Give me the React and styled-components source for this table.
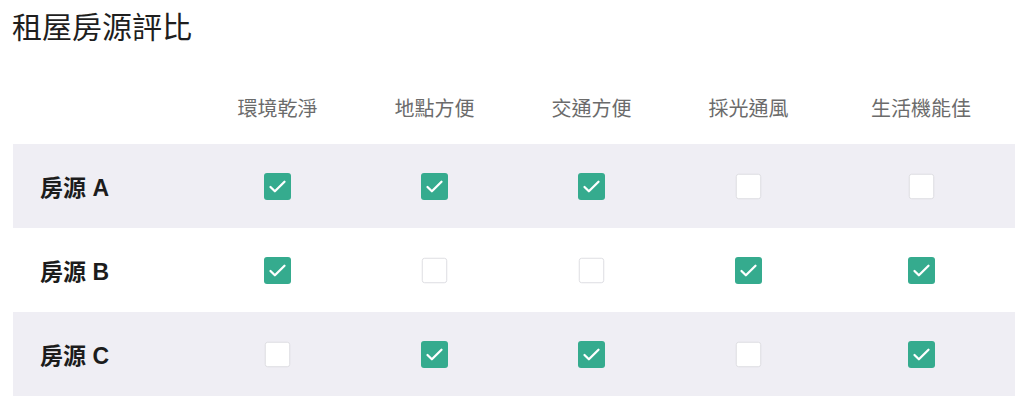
import React from 'react';
import styled, { createGlobalStyle } from 'styled-components';

const GlobalStyle = createGlobalStyle`
  html, body {
    margin: 0;
    padding: 0;
    background: #ffffff;
  }
  body {
    font-family: "Liberation Sans", "Noto Sans CJK TC", sans-serif;
    color: #222;
  }
`;

const Page = styled.div`
  width: 1024px;
  height: 408px;
  padding: 0 9px 0 13px;
  box-sizing: border-box;
  overflow: hidden;
`;

const Title = styled.h1`
  margin: 0;
  padding-top: 7px;
  margin-left: -1px;
  font-family: "Noto Sans CJK TC", sans-serif;
  font-size: 30px;
  font-weight: 400;
  line-height: 37px;
  color: #1e1e1e;
`;

const Grid = styled.div`
  display: grid;
  grid-template-columns: 186px 157px 157px 157px 157px 188px;
`;

const HeaderRow = styled.div`
  display: contents;
`;

const HeadCell = styled.div`
  height: 100px;
  padding-top: 27px;
  box-sizing: border-box;
  display: flex;
  align-items: center;
  justify-content: center;
  font-family: "Noto Sans CJK TC", sans-serif;
  font-size: 20px;
  color: #6b6b6b;
`;

const Row = styled.div`
  grid-column: 1 / -1;
  display: grid;
  grid-template-columns: subgrid;
  height: 84px;
  background: ${({ $shaded }) => ($shaded ? '#efeef4' : '#ffffff')};
`;

const Label = styled.div`
  display: flex;
  align-items: center;
  padding-left: 27px;
  font-family: "Liberation Sans", "Noto Sans CJK TC", sans-serif;
  font-size: 23px;
  font-weight: 700;
  color: #1c1c1c;
`;

const Cell = styled.div`
  display: flex;
  align-items: center;
  justify-content: center;
`;

const Box = styled.span`
  width: 27px;
  height: 27px;
  box-sizing: border-box;
  border-radius: 3px;
  display: flex;
  align-items: center;
  justify-content: center;
  background: ${({ $on }) => ($on ? '#35ab8e' : '#ffffff')};
  border: ${({ $on }) => ($on ? 'none' : '1.5px solid #dcdce0')};
  transform: ${({ $on }) => ($on ? 'none' : 'scale(0.94)')};
`;

const criteria = ['環境乾淨', '地點方便', '交通方便', '採光通風', '生活機能佳'];

const listings = [
  { name: '房源 A', checks: [true, true, true, false, false] },
  { name: '房源 B', checks: [true, false, false, true, true] },
  { name: '房源 C', checks: [false, true, true, false, true] },
];

const Check = ({ on }) => (
  <Box $on={on}>
    {on && (
      <svg width="21" height="21" viewBox="0 0 24 24" fill="none">
        <path d="M4 12.5l5 5L20 6.5" stroke="#fff" strokeWidth="2.6" strokeLinecap="round" strokeLinejoin="round" />
      </svg>
    )}
  </Box>
);

export default function App() {
  return (
    <>
      <GlobalStyle />
      <Page>
        <Title>租屋房源評比</Title>
        <Grid>
          <HeaderRow>
            <HeadCell />
            {criteria.map((c) => (
              <HeadCell key={c}>{c}</HeadCell>
            ))}
          </HeaderRow>
          {listings.map((l, i) => (
            <Row key={l.name} $shaded={i % 2 === 0}>
              <Label>{l.name}</Label>
              {l.checks.map((on, j) => (
                <Cell key={j}>
                  <Check on={on} />
                </Cell>
              ))}
            </Row>
          ))}
        </Grid>
      </Page>
    </>
  );
}
